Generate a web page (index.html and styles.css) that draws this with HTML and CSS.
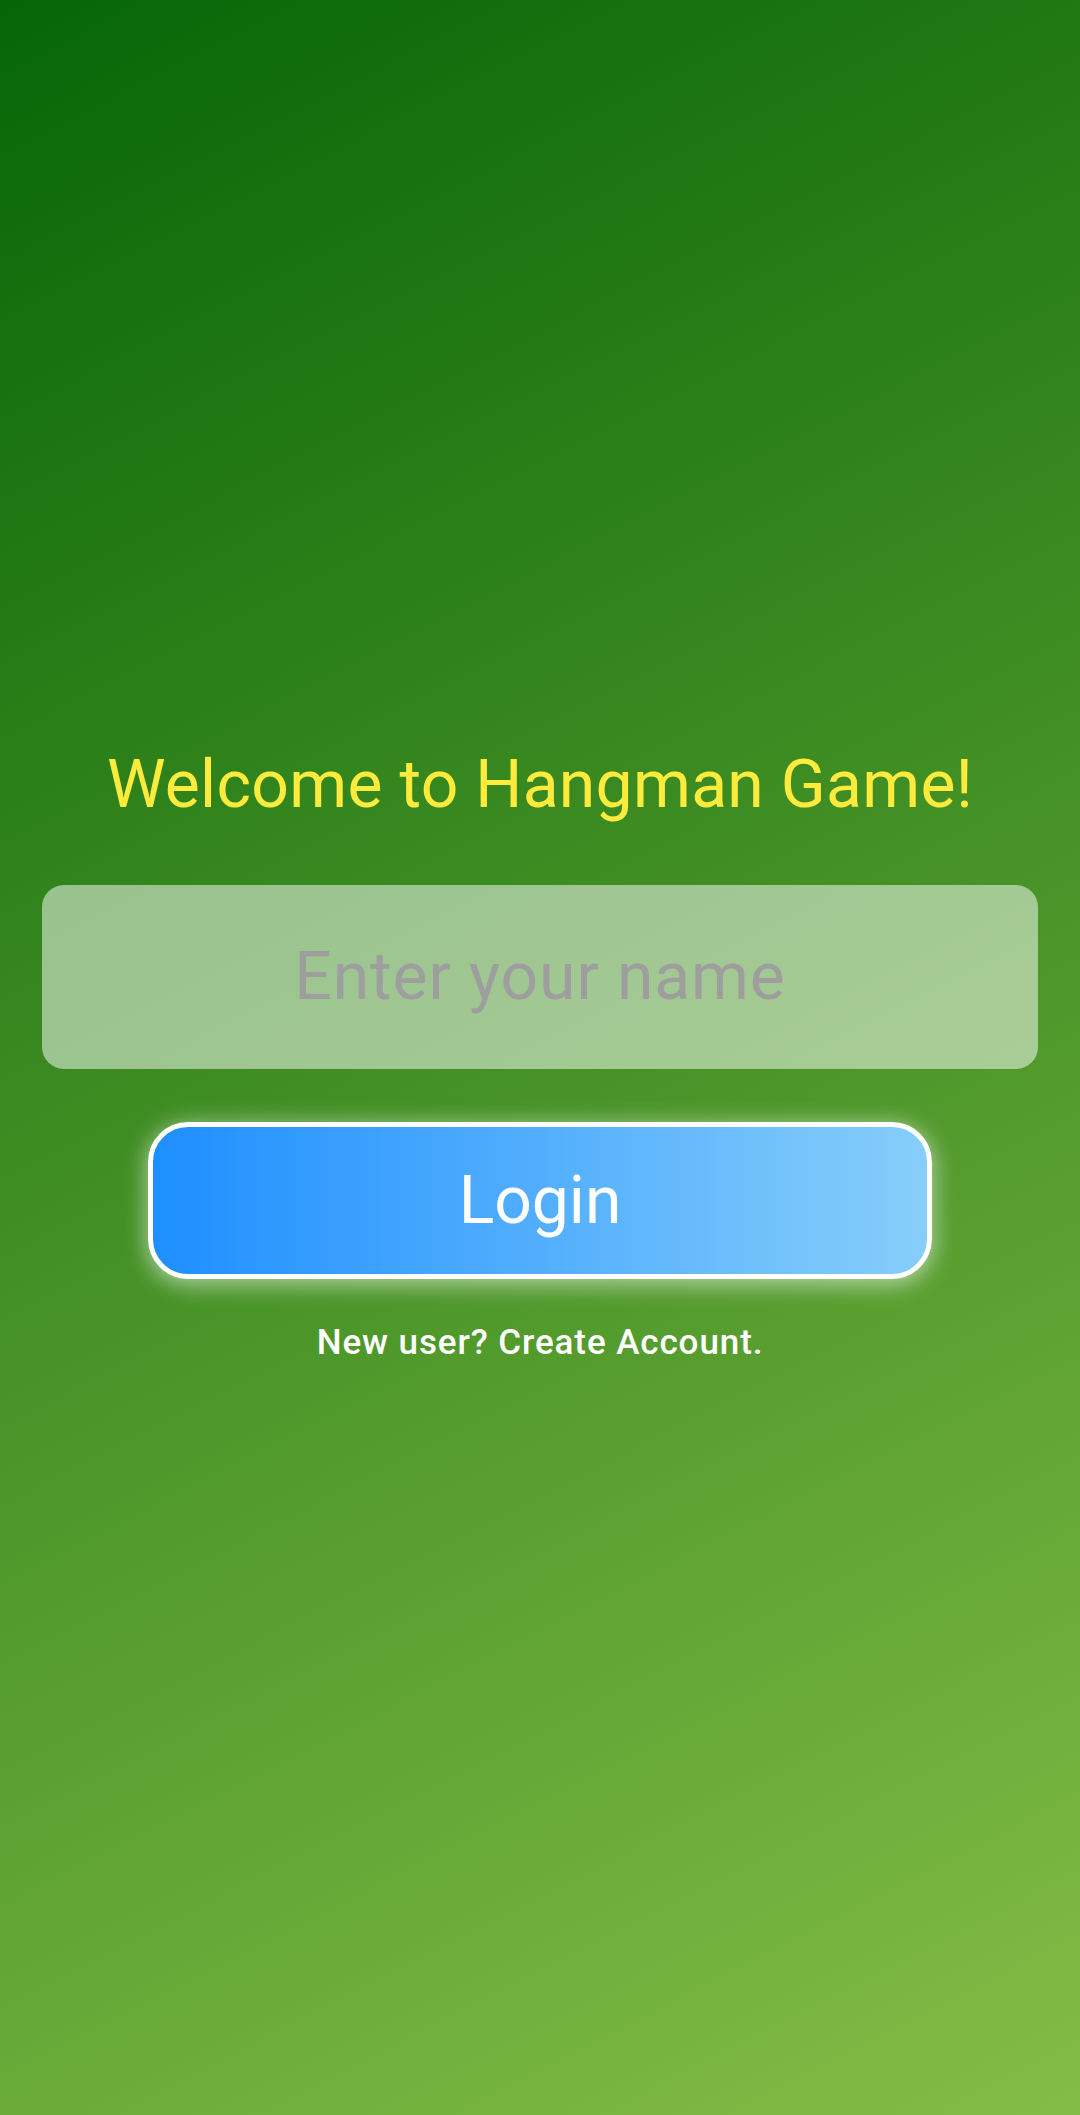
FILE: index.html
```html
<!DOCTYPE html>
<html lang="en">
<head>
<meta charset="utf-8">
<title>Hangman Login</title>
<link rel="stylesheet" href="styles.css">
</head>
<body>
<main class="screen">
  <h1 class="title">Welcome to Hangman Game!</h1>
  <div class="field"><input class="name-input" type="text" placeholder="Enter your name"></div>
  <button class="login-btn" type="button">Login</button>
  <a class="signup-link" href="#">New user? Create Account.</a>
</main>
</body>
</html>
```

FILE: styles.css
```css
html, body {
  margin: 0;
  padding: 0;
}
body {
  width: 1080px;
  height: 2115px;
  font-family: Roboto, "Noto Sans", "Liberation Sans", sans-serif;
  background: linear-gradient(152.95deg, #066606 0%, #84bd46 100%);
  overflow: hidden;
}
.screen {
  height: 2115px;
  box-sizing: border-box;
  padding-bottom: 6px;
  display: flex;
  flex-direction: column;
  align-items: center;
  justify-content: center;
}
.title {
  margin: 0;
  font-size: 66px;
  font-weight: 400;
  line-height: 77px;
  letter-spacing: 0.3px;
  color: #ffeb3b;
  text-align: center;
}
.field {
  margin-top: 62px;
  width: 996px;
  height: 184px;
  border-radius: 22px;
  background: rgba(255, 255, 255, 0.5);
  display: flex;
  align-items: center;
}
.name-input {
  width: 100%;
  border: none;
  outline: none;
  background: transparent;
  font-family: Roboto, "Noto Sans", sans-serif;
  font-size: 66px;
  letter-spacing: 0.9px;
  color: #333;
  text-align: center;
  padding: 0;
  line-height: 77px;
}
.name-input::placeholder {
  color: #9e9e9e;
  opacity: 1;
}
.login-btn {
  margin-top: 53px;
  width: 784px;
  height: 157px;
  box-sizing: border-box;
  border: 5.5px solid #ffffff;
  border-radius: 40px;
  background: linear-gradient(90deg, #1e8fff 0%, #87cefa 100%);
  box-shadow: 0 4px 22px 2px rgba(255, 255, 255, 0.55);
  font-family: Roboto, "Noto Sans", sans-serif;
  font-size: 66px;
  font-weight: 400;
  color: #ffffff;
  padding: 0;
  cursor: pointer;
}
.signup-link {
  margin-top: 43px;
  font-size: 35px;
  line-height: 42px;
  letter-spacing: 0.9px;
  font-weight: 500;
  color: #ffffff;
  text-decoration: none;
}
```
